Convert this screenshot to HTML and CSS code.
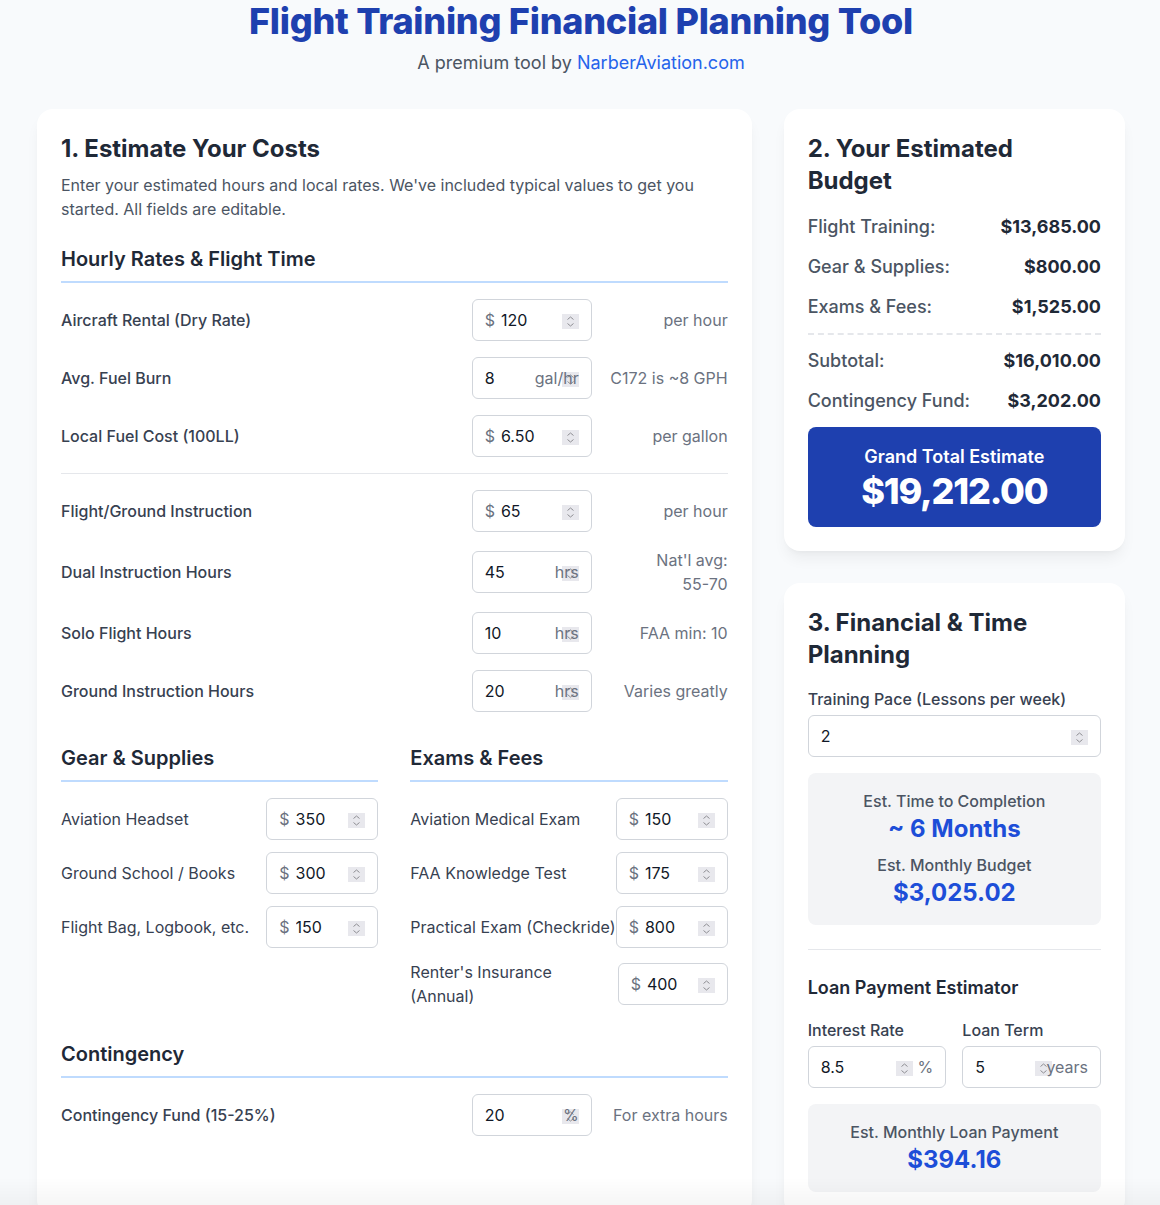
FILE: index.html
```html
<!DOCTYPE html>
<html lang="en">
<head>
<meta charset="utf-8">
<title>Flight Training Financial Planning Tool</title>
<link rel="stylesheet" href="styles.css">
</head>
<body>
<div class="page">
  <header class="hero">
    <h1>Flight Training Financial Planning Tool</h1>
    <p class="tagline">A premium tool by <a href="#">NarberAviation.com</a></p>
  </header>

  <main class="layout">
    <section class="card card-main">
      <h2 class="card-title">1. Estimate Your Costs</h2>
      <p class="intro">Enter your estimated hours and local rates. We've included typical values to get you started. All fields are editable.</p>

      <div class="block">
        <h3 class="sec-title">Hourly Rates &amp; Flight Time</h3>
        <div class="rows">
          <div class="row3">
            <label class="lbl">Aircraft Rental (Dry Rate)</label>
            <div class="field w120"><span class="pre">$</span><input class="val" type="text" value="120"><span class="spin"><svg width="17" height="15" viewBox="0 0 17 15"><path d="M5.5 5.5 8.5 3 11.5 5.5M5.5 9.5 8.5 12 11.5 9.5" fill="none" stroke="#8e8e93" stroke-width="1"/></svg></span></div>
            <span class="note">per hour</span>
          </div>
          <div class="row3">
            <label class="lbl">Avg. Fuel Burn</label>
            <div class="field w120"><input class="val" type="text" value="8"><span class="spin"><svg width="17" height="15" viewBox="0 0 17 15"><path d="M5.5 5.5 8.5 3 11.5 5.5M5.5 9.5 8.5 12 11.5 9.5" fill="none" stroke="#8e8e93" stroke-width="1"/></svg></span><span class="unit">gal/hr</span></div>
            <span class="note">C172 is ~8 GPH</span>
          </div>
          <div class="row3">
            <label class="lbl">Local Fuel Cost (100LL)</label>
            <div class="field w120"><span class="pre">$</span><input class="val" type="text" value="6.50"><span class="spin"><svg width="17" height="15" viewBox="0 0 17 15"><path d="M5.5 5.5 8.5 3 11.5 5.5M5.5 9.5 8.5 12 11.5 9.5" fill="none" stroke="#8e8e93" stroke-width="1"/></svg></span></div>
            <span class="note">per gallon</span>
          </div>
          <hr class="sep">
          <div class="row3">
            <label class="lbl">Flight/Ground Instruction</label>
            <div class="field w120"><span class="pre">$</span><input class="val" type="text" value="65"><span class="spin"><svg width="17" height="15" viewBox="0 0 17 15"><path d="M5.5 5.5 8.5 3 11.5 5.5M5.5 9.5 8.5 12 11.5 9.5" fill="none" stroke="#8e8e93" stroke-width="1"/></svg></span></div>
            <span class="note">per hour</span>
          </div>
          <div class="row3">
            <label class="lbl">Dual Instruction Hours</label>
            <div class="field w120"><input class="val" type="text" value="45"><span class="spin"><svg width="17" height="15" viewBox="0 0 17 15"><path d="M5.5 5.5 8.5 3 11.5 5.5M5.5 9.5 8.5 12 11.5 9.5" fill="none" stroke="#8e8e93" stroke-width="1"/></svg></span><span class="unit">hrs</span></div>
            <span class="note">Nat'l avg:<br>55-70</span>
          </div>
          <div class="row3">
            <label class="lbl">Solo Flight Hours</label>
            <div class="field w120"><input class="val" type="text" value="10"><span class="spin"><svg width="17" height="15" viewBox="0 0 17 15"><path d="M5.5 5.5 8.5 3 11.5 5.5M5.5 9.5 8.5 12 11.5 9.5" fill="none" stroke="#8e8e93" stroke-width="1"/></svg></span><span class="unit">hrs</span></div>
            <span class="note">FAA min: 10</span>
          </div>
          <div class="row3">
            <label class="lbl">Ground Instruction Hours</label>
            <div class="field w120"><input class="val" type="text" value="20"><span class="spin"><svg width="17" height="15" viewBox="0 0 17 15"><path d="M5.5 5.5 8.5 3 11.5 5.5M5.5 9.5 8.5 12 11.5 9.5" fill="none" stroke="#8e8e93" stroke-width="1"/></svg></span><span class="unit">hrs</span></div>
            <span class="note">Varies greatly</span>
          </div>
        </div>
      </div>

      <div class="two-col">
        <div class="col">
          <h3 class="sec-title">Gear &amp; Supplies</h3>
          <div class="rows tight">
            <div class="row2">
              <label class="lbl2">Aviation Headset</label>
              <div class="field w112"><span class="pre">$</span><input class="val" type="text" value="350"><span class="spin"><svg width="17" height="15" viewBox="0 0 17 15"><path d="M5.5 5.5 8.5 3 11.5 5.5M5.5 9.5 8.5 12 11.5 9.5" fill="none" stroke="#8e8e93" stroke-width="1"/></svg></span></div>
            </div>
            <div class="row2">
              <label class="lbl2">Ground School / Books</label>
              <div class="field w112"><span class="pre">$</span><input class="val" type="text" value="300"><span class="spin"><svg width="17" height="15" viewBox="0 0 17 15"><path d="M5.5 5.5 8.5 3 11.5 5.5M5.5 9.5 8.5 12 11.5 9.5" fill="none" stroke="#8e8e93" stroke-width="1"/></svg></span></div>
            </div>
            <div class="row2">
              <label class="lbl2">Flight Bag, Logbook, etc.</label>
              <div class="field w112"><span class="pre">$</span><input class="val" type="text" value="150"><span class="spin"><svg width="17" height="15" viewBox="0 0 17 15"><path d="M5.5 5.5 8.5 3 11.5 5.5M5.5 9.5 8.5 12 11.5 9.5" fill="none" stroke="#8e8e93" stroke-width="1"/></svg></span></div>
            </div>
          </div>
        </div>
        <div class="col">
          <h3 class="sec-title">Exams &amp; Fees</h3>
          <div class="rows tight">
            <div class="row2">
              <label class="lbl2">Aviation Medical Exam</label>
              <div class="field w112"><span class="pre">$</span><input class="val" type="text" value="150"><span class="spin"><svg width="17" height="15" viewBox="0 0 17 15"><path d="M5.5 5.5 8.5 3 11.5 5.5M5.5 9.5 8.5 12 11.5 9.5" fill="none" stroke="#8e8e93" stroke-width="1"/></svg></span></div>
            </div>
            <div class="row2">
              <label class="lbl2">FAA Knowledge Test</label>
              <div class="field w112"><span class="pre">$</span><input class="val" type="text" value="175"><span class="spin"><svg width="17" height="15" viewBox="0 0 17 15"><path d="M5.5 5.5 8.5 3 11.5 5.5M5.5 9.5 8.5 12 11.5 9.5" fill="none" stroke="#8e8e93" stroke-width="1"/></svg></span></div>
            </div>
            <div class="row2">
              <label class="lbl2">Practical Exam (Checkride)</label>
              <div class="field w112"><span class="pre">$</span><input class="val" type="text" value="800"><span class="spin"><svg width="17" height="15" viewBox="0 0 17 15"><path d="M5.5 5.5 8.5 3 11.5 5.5M5.5 9.5 8.5 12 11.5 9.5" fill="none" stroke="#8e8e93" stroke-width="1"/></svg></span></div>
            </div>
            <div class="row2">
              <label class="lbl2">Renter's Insurance<br>(Annual)</label>
              <div class="field w110"><span class="pre">$</span><input class="val" type="text" value="400"><span class="spin"><svg width="17" height="15" viewBox="0 0 17 15"><path d="M5.5 5.5 8.5 3 11.5 5.5M5.5 9.5 8.5 12 11.5 9.5" fill="none" stroke="#8e8e93" stroke-width="1"/></svg></span></div>
            </div>
          </div>
        </div>
      </div>

      <div class="block gap-top">
        <h3 class="sec-title">Contingency</h3>
        <div class="rows">
          <div class="row3">
            <label class="lbl">Contingency Fund (15-25%)</label>
            <div class="field w120"><input class="val" type="text" value="20"><span class="spin"><svg width="17" height="15" viewBox="0 0 17 15"><path d="M5.5 5.5 8.5 3 11.5 5.5M5.5 9.5 8.5 12 11.5 9.5" fill="none" stroke="#8e8e93" stroke-width="1"/></svg></span><span class="unit">%</span></div>
            <span class="note">For extra hours</span>
          </div>
        </div>
      </div>
    </section>

    <aside class="side">
      <section class="card">
        <h2 class="card-title mb16">2. Your Estimated Budget</h2>
        <div class="blist">
          <div class="brow"><span class="bl">Flight Training:</span><span class="bv">$13,685.00</span></div>
          <div class="brow"><span class="bl">Gear &amp; Supplies:</span><span class="bv">$800.00</span></div>
          <div class="brow"><span class="bl">Exams &amp; Fees:</span><span class="bv">$1,525.00</span></div>
        </div>
        <div class="blist dashed">
          <div class="brow"><span class="bl">Subtotal:</span><span class="bv">$16,010.00</span></div>
          <div class="brow"><span class="bl">Contingency Fund:</span><span class="bv">$3,202.00</span></div>
        </div>
        <div class="grand">
          <div class="grand-lbl">Grand Total Estimate</div>
          <div class="grand-val">$19,212.00</div>
        </div>
      </section>

      <section class="card">
        <h2 class="card-title mb16">3. Financial &amp; Time Planning</h2>
        <label class="flabel">Training Pace (Lessons per week)</label>
        <div class="field wfull"><input class="val" type="text" value="2"><span class="spin"><svg width="17" height="15" viewBox="0 0 17 15"><path d="M5.5 5.5 8.5 3 11.5 5.5M5.5 9.5 8.5 12 11.5 9.5" fill="none" stroke="#8e8e93" stroke-width="1"/></svg></span></div>
        <div class="stat">
          <div class="stat-lbl">Est. Time to Completion</div>
          <div class="stat-val">~ 6 Months</div>
          <div class="stat-lbl mt8">Est. Monthly Budget</div>
          <div class="stat-val">$3,025.02</div>
        </div>
        <div class="loan">
          <h3 class="loan-title">Loan Payment Estimator</h3>
          <div class="loan-grid">
            <div>
              <label class="flabel">Interest Rate</label>
              <div class="field wfull"><input class="val" type="text" value="8.5"><span class="spin r32"><svg width="17" height="15" viewBox="0 0 17 15"><path d="M5.5 5.5 8.5 3 11.5 5.5M5.5 9.5 8.5 12 11.5 9.5" fill="none" stroke="#8e8e93" stroke-width="1"/></svg></span><span class="unit">%</span></div>
            </div>
            <div>
              <label class="flabel">Loan Term</label>
              <div class="field wfull"><input class="val" type="text" value="5"><span class="spin r48"><svg width="17" height="15" viewBox="0 0 17 15"><path d="M5.5 5.5 8.5 3 11.5 5.5M5.5 9.5 8.5 12 11.5 9.5" fill="none" stroke="#8e8e93" stroke-width="1"/></svg></span><span class="unit">years</span></div>
            </div>
          </div>
          <div class="stat">
            <div class="stat-lbl">Est. Monthly Loan Payment</div>
            <div class="stat-val">$394.16</div>
          </div>
        </div>
      </section>
    </aside>
  </main>
</div>
<div class="fade"></div>
</body>
</html>
```

FILE: styles.css
```css
* { box-sizing: border-box; }

body {
  margin: 0;
  background: #f8fafc;
  font-family: Inter, "Noto Sans", "Liberation Sans", sans-serif;
  color: #1f2937;
}

.page {
  max-width: 1154px;
  margin: 0 auto;
  padding: 1px 32px 32px 34px;
}

.hero { text-align: center; margin-bottom: 32px; }

.hero h1 {
  margin: 0;
  font-size: 36px;
  line-height: 40px;
  font-weight: 800;
  color: #1e40af;
  letter-spacing: -0.25px;
}

.tagline {
  margin: 8px 0 0;
  font-size: 18px;
  line-height: 28px;
  color: #4b5563;
}

.tagline a { color: #2563eb; text-decoration: none; }

.layout {
  display: grid;
  grid-template-columns: repeat(3, minmax(0, 1fr));
  gap: 32px;
  align-items: stretch;
}

.card-main { grid-column: span 2; }

.side { display: flex; flex-direction: column; gap: 32px; }

.card {
  background: #fff;
  border-radius: 16px;
  padding: 24px;
  box-shadow: 0 10px 15px -3px rgba(0, 0, 0, 0.06), 0 4px 6px -4px rgba(0, 0, 0, 0.05);
}

.card-title {
  margin: 0 0 8px;
  font-size: 24px;
  line-height: 32px;
  font-weight: 700;
  color: #1f2937;
}

.card-title.mb16 { margin-bottom: 16px; }

.intro {
  margin: 0 0 24px;
  font-size: 16px;
  line-height: 24px;
  color: #4b5563;
}

.sec-title {
  margin: 0 0 16px;
  padding-bottom: 8px;
  border-bottom: 2px solid #bfdbfe;
  font-size: 20px;
  line-height: 28px;
  font-weight: 600;
  color: #1f2937;
}

.rows { display: flex; flex-direction: column; gap: 16px; }
.rows.tight { gap: 12px; }

.sep { margin: 0; border: 0; border-top: 1px solid #e5e7eb; }

.row3 {
  display: grid;
  grid-template-columns: minmax(0, 1fr) 120px 120px;
  column-gap: 16px;
  align-items: center;
}

.lbl {
  font-size: 16px;
  line-height: 24px;
  font-weight: 500;
  color: #374151;
}

.note {
  font-size: 16px;
  line-height: 24px;
  color: #6b7280;
  text-align: right;
}

.row2 {
  display: flex;
  align-items: center;
  justify-content: space-between;
}

.lbl2 {
  font-size: 16px;
  line-height: 24px;
  color: #374151;
  white-space: nowrap;
}

.field {
  position: relative;
  display: flex;
  align-items: center;
  height: 42px;
  padding: 0 12px;
  background: #fff;
  border: 1px solid #d1d5db;
  border-radius: 6px;
  flex-shrink: 0;
}

.w120 { width: 120px; }
.w112 { width: 112px; }
.w110 { width: 110px; }
.wfull { width: 100%; }

.pre { color: #6b7280; font-size: 16px; margin-right: 6px; }

.val {
  flex: 1;
  min-width: 0;
  width: 100%;
  border: 0;
  outline: 0;
  padding: 0;
  background: transparent;
  font: inherit;
  font-size: 16px;
  line-height: 24px;
  color: #111827;
}

.spin {
  position: absolute;
  right: 12px;
  top: 14px;
  width: 17px;
  height: 15px;
  background: #e8e8ed;
  display: block;
}

.spin svg { display: block; }
.spin.r32 { right: 32px; }
.spin.r48 { right: 48px; }

.unit {
  position: absolute;
  right: 12px;
  top: 0;
  bottom: 0;
  display: flex;
  align-items: center;
  font-size: 16px;
  color: #6b7280;
}

.two-col {
  margin-top: 32px;
  display: grid;
  grid-template-columns: repeat(2, minmax(0, 1fr));
  gap: 32px;
}

.gap-top { margin-top: 32px; }

.blist { display: flex; flex-direction: column; gap: 12px; }

.blist.dashed {
  margin-top: 12px;
  padding-top: 12px;
  border-top: 2px dashed #e5e7eb;
}

.brow {
  display: flex;
  justify-content: space-between;
  font-size: 18px;
  line-height: 28px;
}

.bl { color: #4b5563; font-weight: 500; }
.bv { font-weight: 700; color: #1f2937; }

.grand {
  margin-top: 12px;
  padding: 16px;
  border-radius: 8px;
  background: #1e40af;
  color: #fff;
  text-align: center;
}

.grand-lbl { font-size: 18px; line-height: 28px; font-weight: 600; }
.grand-val { font-size: 36px; line-height: 40px; font-weight: 800; letter-spacing: -1.2px; }

.flabel {
  display: block;
  margin-bottom: 4px;
  font-size: 16px;
  line-height: 24px;
  font-weight: 500;
  color: #374151;
}

.stat {
  margin-top: 16px;
  padding: 16px;
  border-radius: 8px;
  background: #f3f4f6;
  text-align: center;
}

.stat-lbl { font-size: 16px; line-height: 24px; font-weight: 500; color: #4b5563; }
.stat-lbl.mt8 { margin-top: 8px; }
.stat-val { font-size: 24px; line-height: 32px; font-weight: 700; color: #1d4ed8; }

.loan {
  margin-top: 24px;
  padding-top: 24px;
  border-top: 1px solid #e5e7eb;
}

.loan-title {
  margin: 0 0 16px;
  font-size: 18px;
  line-height: 28px;
  font-weight: 600;
  color: #1f2937;
}

.loan-grid {
  display: grid;
  grid-template-columns: repeat(2, minmax(0, 1fr));
  gap: 16px;
}

.fade {
  position: fixed;
  left: 0;
  right: 0;
  bottom: 0;
  height: 28px;
  background: linear-gradient(to bottom, rgba(0, 0, 0, 0), rgba(0, 0, 0, 0.035));
  pointer-events: none;
}
```
